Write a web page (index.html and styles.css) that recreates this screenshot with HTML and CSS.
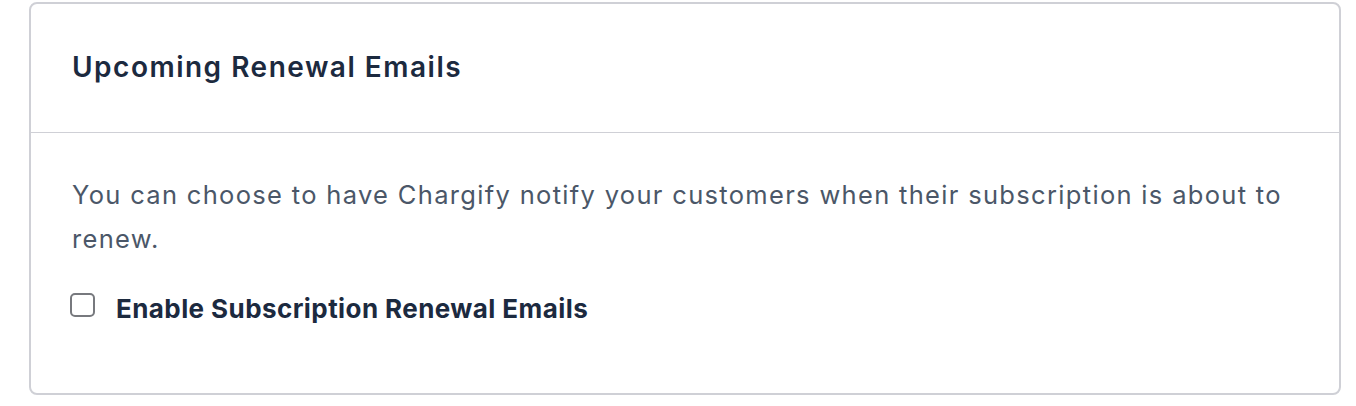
FILE: index.html
```html
<!DOCTYPE html>
<html lang="en">
<head>
<meta charset="utf-8">
<title>Upcoming Renewal Emails</title>
<link rel="stylesheet" href="styles.css">
</head>
<body>
<section class="card">
  <header class="card-header">
    <h2 class="card-title">Upcoming Renewal Emails</h2>
  </header>
  <div class="card-body">
    <p class="description">You can choose to have Chargify notify your customers when their subscription is about to renew.</p>
    <label class="check-row">
      <input type="checkbox" class="check-input">
      <span class="check-box"></span>
      <span class="check-label">Enable Subscription Renewal Emails</span>
    </label>
  </div>
</section>
</body>
</html>
```
FILE: styles.css
```css
html, body {
  margin: 0;
  padding: 0;
  background: #ffffff;
}
body {
  padding: 2px 15px 0 29px;
  font-family: "Inter", "Lato", sans-serif;
}
.card {
  border: 2px solid #cfd0d6;
  border-radius: 8px;
  height: 393px;
  box-sizing: border-box;
  display: flex;
  flex-direction: column;
}
.card-header {
  height: 129px;
  box-sizing: border-box;
  border-bottom: 1px solid #cfd0d6;
  display: flex;
  align-items: center;
  padding: 0 41px 2px 41px;
}
.card-title {
  margin: 0;
  font-size: 28px;
  font-weight: 600;
  letter-spacing: 1.5px;
  color: #1c2a3f;
}
.card-body {
  padding: 40px 41px 0 41px;
}
.description {
  margin: 0;
  font-size: 25.5px;
  line-height: 44px;
  letter-spacing: 1.32px;
  color: #4b5768;
}
.check-row {
  display: flex;
  align-items: flex-start;
  gap: 21px;
  margin-top: 32px;
  cursor: pointer;
}
.check-input {
  display: none;
}
.check-box {
  flex: none;
  width: 25px;
  height: 24px;
  margin-left: -2px;
  box-sizing: border-box;
  border: 2px solid #77797e;
  border-radius: 5px;
  background: #fff;
}
.check-label {
  padding-top: 0;
  font-size: 26px;
  line-height: 32px;
  font-weight: 700;
  letter-spacing: 0.42px;
  color: #1c2a3f;
}
```
